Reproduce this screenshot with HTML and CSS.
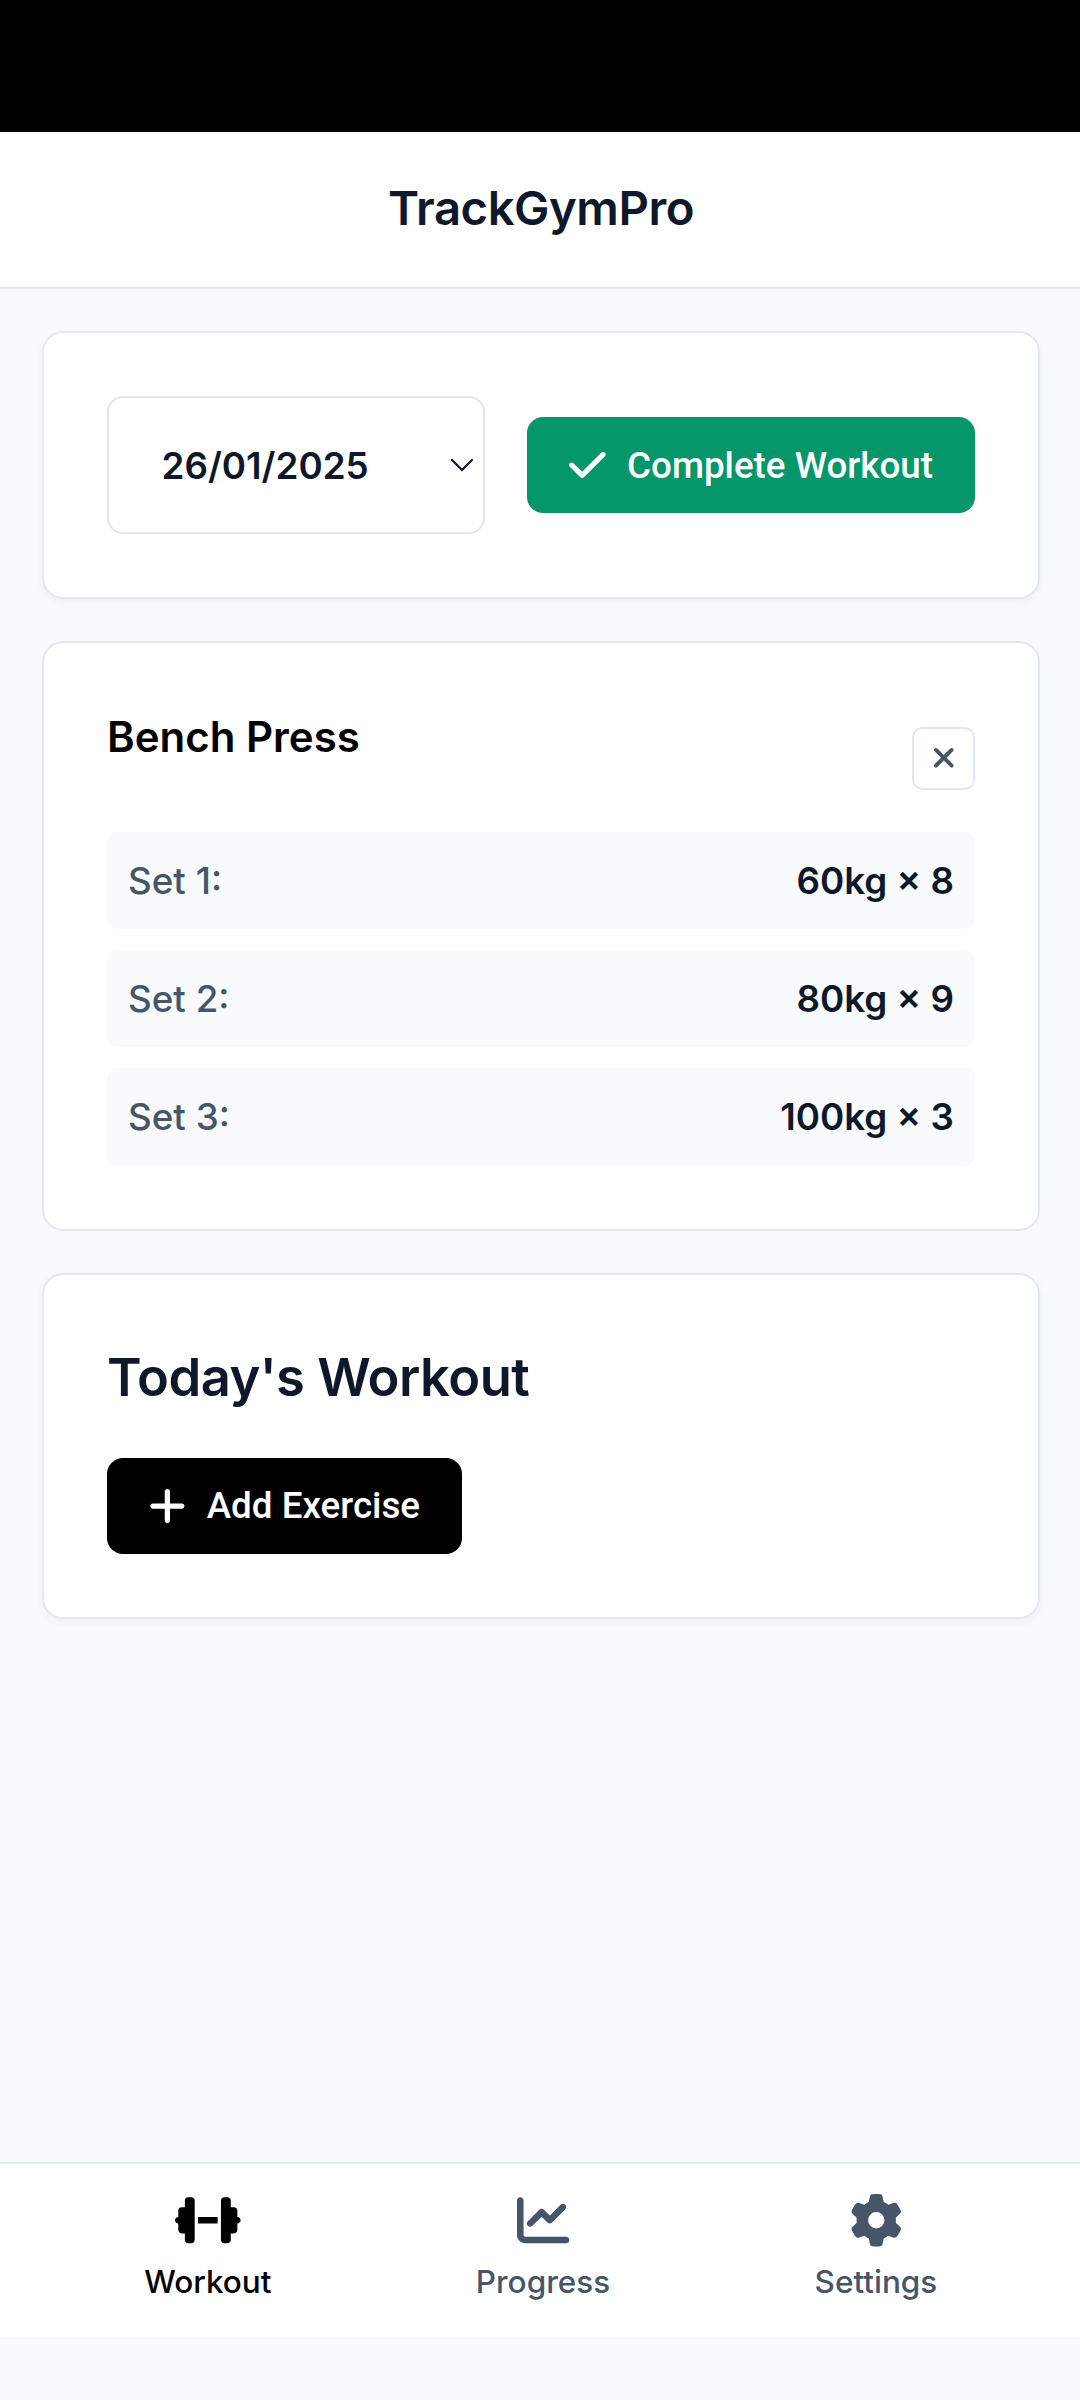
FILE: index.html
```html
<!DOCTYPE html>
<html lang="en">
<head>
<meta charset="utf-8">
<title>TrackGymPro</title>
<link rel="stylesheet" href="styles.css">
</head>
<body>
<div class="status-bar"></div>
<header class="header"><h1 class="header-title">TrackGymPro</h1></header>
<main class="content">
  <section class="card card-raised toolbar">
    <div class="date-select">
      <span class="date-value">26/01/2025</span>
      <svg class="chevron" viewBox="0 0 24 14"><path d="M2 2l10 10L22 2"/></svg>
    </div>
    <button class="btn btn-success" type="button">
      <svg class="icon" viewBox="0 0 448 512"><path d="M438.6 105.4c12.5 12.5 12.5 32.8 0 45.3l-256 256c-12.5 12.5-32.8 12.5-45.3 0l-128-128c-12.5-12.5-12.5-32.8 0-45.3s32.8-12.5 45.3 0L160 338.7 393.4 105.4c12.5-12.5 32.8-12.5 45.3 0z"/></svg>
      <span>Complete Workout</span>
    </button>
  </section>
  <section class="card">
    <div class="exercise-head">
      <h3 class="exercise-name">Bench Press</h3>
      <button class="close" type="button" aria-label="Remove exercise">
        <svg class="icon-small" viewBox="0 0 384 512"><path d="M342.6 150.6c12.5-12.5 12.5-32.8 0-45.3s-32.8-12.5-45.3 0L192 210.7 86.6 105.4c-12.5-12.5-32.8-12.5-45.3 0s-12.5 32.8 0 45.3L146.7 256 41.4 361.4c-12.5 12.5-12.5 32.8 0 45.3s32.8 12.5 45.3 0L192 301.3 297.4 406.6c12.5 12.5 32.8 12.5 45.3 0s12.5-32.8 0-45.3L237.3 256 342.6 150.6z"/></svg>
      </button>
    </div>
    <div class="sets">
      <div class="set"><span class="set-label">Set 1:</span><span class="set-value">60kg × 8</span></div>
      <div class="set"><span class="set-label">Set 2:</span><span class="set-value">80kg × 9</span></div>
      <div class="set"><span class="set-label">Set 3:</span><span class="set-value">100kg × 3</span></div>
    </div>
  </section>
  <section class="card card-raised">
    <h2 class="section-title">Today's Workout</h2>
    <button class="btn btn-dark" type="button">
      <svg class="icon" viewBox="0 0 448 512"><path d="M256 80c0-17.700-14.300-32-32-32s-32 14.300-32 32V224H48c-17.700 0-32 14.300-32 32s14.300 32 32 32H192V432c0 17.700 14.300 32 32 32s32-14.300 32-32V288H400c17.700 0 32-14.300 32-32s-14.300-32-32-32H256V80z"/></svg>
      <span>Add Exercise</span>
    </button>
  </section>
</main>
<nav class="nav">
  <a class="nav-item active">
    <svg class="nav-icon" viewBox="0 0 640 512"><path d="M96 64c0-17.700 14.300-32 32-32h32c17.700 0 32 14.300 32 32V224v64V448c0 17.700-14.300 32-32 32H128c-17.700 0-32-14.300-32-32V384H64c-17.700 0-32-14.300-32-32V288c-17.700 0-32-14.300-32-32s14.300-32 32-32V160c0-17.700 14.300-32 32-32H96V64zm448 0v64h32c17.700 0 32 14.300 32 32v64c17.700 0 32 14.300 32 32s-14.300 32-32 32v64c0 17.700-14.300 32-32 32H544v64c0 17.700-14.300 32-32 32H480c-17.700 0-32-14.300-32-32V288 224 64c0-17.700 14.300-32 32-32h32c17.700 0 32 14.300 32 32zM416 224v64H224V224H416z"/></svg>
    <span>Workout</span>
  </a>
  <a class="nav-item">
    <svg class="nav-icon" viewBox="0 0 512 512"><path d="M64 64c0-17.700-14.300-32-32-32S0 46.300 0 64V400c0 44.200 35.800 80 80 80H480c17.700 0 32-14.300 32-32s-14.300-32-32-32H80c-8.800 0-16-7.200-16-16V64zm406.600 86.600c12.500-12.500 12.500-32.800 0-45.300s-32.800-12.500-45.300 0L320 210.700l-57.400-57.400c-12.500-12.500-32.800-12.500-45.300 0l-112 112c-12.500 12.500-12.500 32.800 0 45.300s32.800 12.500 45.300 0L240 221.300l57.400 57.400c12.500 12.500 32.800 12.500 45.300 0l128-128z"/></svg>
    <span>Progress</span>
  </a>
  <a class="nav-item">
    <svg class="nav-icon" viewBox="0 0 512 512"><path d="M495.900 166.600c3.200 8.700 .5 18.400-6.400 24.600l-43.300 39.400c1.100 8.300 1.700 16.800 1.700 25.400s-.6 17.100-1.700 25.400l43.300 39.400c6.900 6.200 9.600 15.900 6.400 24.600c-4.400 11.900-9.700 23.300-15.800 34.300l-4.700 8.100c-6.600 11-14 21.400-22.100 31.200c-5.900 7.200-15.700 9.600-24.500 6.800l-55.700-17.700c-13.400 10.300-28.200 18.900-44 25.400l-12.500 57.100c-2 9.100-9 16.300-18.200 17.800c-13.800 2.300-28 3.500-42.500 3.500s-28.700-1.200-42.500-3.500c-9.200-1.500-16.200-8.700-18.200-17.800l-12.500-57.100c-15.800-6.500-30.600-15.100-44-25.400L83.100 425.900c-8.800 2.800-18.600 .3-24.500-6.800c-8.100-9.800-15.500-20.200-22.100-31.200l-4.700-8.100c-6.100-11-11.400-22.400-15.800-34.300c-3.200-8.700-.5-18.400 6.400-24.600l43.300-39.400C64.600 273.100 64 264.600 64 256s.6-17.100 1.700-25.400L22.400 191.200c-6.900-6.200-9.600-15.900-6.400-24.600c4.400-11.900 9.700-23.300 15.800-34.300l4.700-8.100c6.600-11 14-21.400 22.100-31.200c5.900-7.200 15.700-9.600 24.500-6.800l55.700 17.700c13.400-10.300 28.200-18.900 44-25.400l12.500-57.100c2-9.100 9-16.300 18.200-17.800C227.300 1.200 241.500 0 256 0s28.700 1.200 42.500 3.500c9.200 1.500 16.200 8.700 18.200 17.800l12.500 57.100c15.800 6.500 30.600 15.100 44 25.400l55.700-17.700c8.800-2.800 18.600-.3 24.500 6.800c8.100 9.800 15.500 20.200 22.100 31.200l4.700 8.100c6.100 11 11.400 22.400 15.800 34.300zM256 336a80 80 0 1 0 0-160 80 80 0 1 0 0 160z"/></svg>
    <span>Settings</span>
  </a>
</nav>
</body>
</html>
```
FILE: styles.css
```css
* { box-sizing: border-box; }

body {
  margin: 0;
  min-height: 2400px;
  display: flex;
  flex-direction: column;
  background: #f8fafc;
  color: #0f172a;
  font-family: Inter, "Liberation Sans", sans-serif;
  font-size: 36.75px;
}

h1, h2, h3 { margin: 0; font-weight: 600; }

svg { display: block; fill: currentColor; }

.status-bar { height: 132px; background: #000; }

.header {
  height: 157px;
  display: flex;
  align-items: center;
  justify-content: center;
  padding: 0 0 4px 2px;
  background: #fff;
  border-bottom: 2px solid #e2e8f0;
}

.header-title {
  font-size: 47.25px;
  line-height: 71px;
  letter-spacing: -0.01em;
}

.content {
  flex: 1;
  display: flex;
  flex-direction: column;
  gap: 42px;
  padding: 42px 40px 0 42px;
}

.card {
  padding: 63px;
  background: #fff;
  border: 2px solid #e2e8f0;
  border-radius: 21px;
}

.card-raised { box-shadow: 0 3px 8px rgba(0, 0, 0, 0.05); }

.toolbar {
  display: flex;
  align-items: center;
  gap: 42px;
}

.date-select {
  flex: 1;
  height: 138px;
  display: flex;
  align-items: center;
  justify-content: space-between;
  padding: 0 9px 0 52.5px;
  border: 2px solid #e5e5e5;
  border-radius: 16px;
  font-weight: 600;
}

.date-value { margin-top: 1px; }

.chevron {
  width: 24px;
  height: 14px;
  fill: none;
  stroke: currentColor;
  stroke-width: 2.2;
  stroke-linecap: round;
}

.btn {
  display: inline-flex;
  align-items: center;
  gap: 21px;
  height: 96px;
  padding: 0 42px;
  border: 0;
  border-radius: 16px;
  color: #fff;
  font-family: Roboto, "Liberation Sans", sans-serif;
  font-size: 36.75px;
  font-weight: 500;
  white-space: nowrap;
}

.btn-success { background: #059669; }
.btn-dark { background: #000; }

.icon { width: 36.75px; height: 42px; }
.icon-small { width: 23.6px; height: 31.5px; }

.exercise-head {
  display: flex;
  align-items: flex-start;
  justify-content: space-between;
  height: 126px;
}

.exercise-name {
  color: #000;
  font-size: 42px;
  line-height: 61px;
}

.close {
  display: flex;
  align-items: center;
  justify-content: center;
  width: 63px;
  height: 63px;
  margin-top: 21px;
  padding: 0 0 1px;
  background: #fff;
  border: 2px solid #e2e8f0;
  border-radius: 10.5px;
  color: #475569;
}

.sets { display: flex; flex-direction: column; gap: 21px; }

.set {
  display: flex;
  align-items: center;
  justify-content: space-between;
  height: 97.2px;
  padding: 0 21px;
  background: #f8fafc;
  border-radius: 10.5px;
}

.set-label { color: #475569; font-weight: 500; }
.set-value { font-weight: 600; }

.section-title {
  margin-bottom: 42px;
  font-size: 52.5px;
  line-height: 78px;
  letter-spacing: -0.01em;
}

.nav {
  display: flex;
  align-items: flex-start;
  justify-content: space-around;
  height: 175px;
  margin-bottom: 63px;
  padding: 30px 40.5px 0 42px;
  background: #fff;
  border-top: 2px solid #e2e8f0;
}

.nav-item {
  display: flex;
  flex-direction: column;
  align-items: center;
  gap: 11px;
  color: #475569;
  font-size: 31.5px;
  font-weight: 500;
  line-height: 48px;
}

.nav-item.active { color: #000; }

.nav-icon { height: 52.5px; }
```
